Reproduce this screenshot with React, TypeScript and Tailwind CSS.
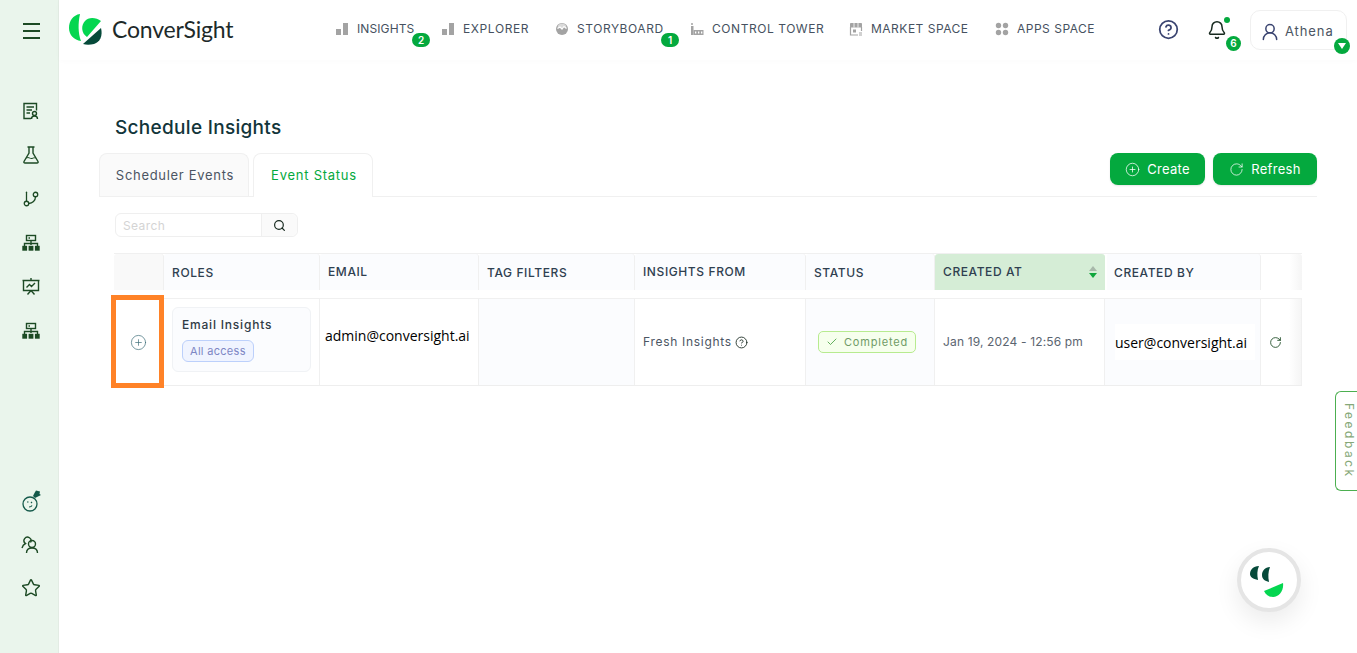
import React from "react";
import { CirclePlus, Check, RotateCw, Search, CircleHelp, Bell, UserRound, Star, GitBranch } from "lucide-react";

const font = "font-['Inter','Liberation_Sans',sans-serif]";

// green logo marks
const LogoMark = () => (
  <svg width="34" height="32" viewBox="69 13 34 32" className="shrink-0">
    <path d="M80 14 C73 15 69 21 69 28 C69 35 74 40 81 41 C78 33 78 23 80 14Z" fill="#04d650" />
    <path d="M101 21 C96 17 88 17 85 21 C81 25 81 33 87 37Z" fill="#04d650" />
    <path d="M83 44 L101 28 C103 36 100 42 94 44 C90 45 86 45 83 44Z" fill="#064a3a" />
  </svg>
);

const BarsIcon = () => (
  <svg width="14" height="14" viewBox="0 0 14 14" className="shrink-0">
    <rect x="1" y="7" width="5" height="6" fill="#a3a3a3" />
    <rect x="8" y="1" width="5" height="12" fill="#a3a3a3" />
  </svg>
);

const StoryIcon = () => (
  <svg width="14" height="14" viewBox="0 0 14 14" className="shrink-0">
    <circle cx="7" cy="7" r="6" fill="#a3a3a3" />
    <path d="M2.5 6.500 L5 5 L7 7 L9 4.500 L11.500 6.500" stroke="#fff" strokeWidth="1.2" fill="none" />
    <path d="M3 3.500 A5 5 0 0 1 11 3.500 L11.500 6.500 L9 4.500 L7 7 L5 5 L2.500 6.500Z" fill="#fff" opacity="0.6" />
  </svg>
);

const TowerIcon = () => (
  <svg width="14" height="14" viewBox="0 0 14 14" className="shrink-0">
    <path d="M2 1v2M1 2h2" stroke="#a3a3a3" strokeWidth="1" />
    <rect x="1" y="4" width="2.500" height="9" fill="#a3a3a3" />
    <rect x="3.500" y="8" width="10" height="5" fill="#a3a3a3" />
    <rect x="5" y="9.500" width="1.300" height="2" fill="#fff" />
    <rect x="8" y="9.500" width="1.300" height="2" fill="#fff" />
    <rect x="11" y="9.500" width="1.300" height="2" fill="#fff" />
  </svg>
);

const MarketIcon = () => (
  <svg width="14" height="14" viewBox="0 0 14 14" className="shrink-0" fill="none">
    <path d="M1.500 5V13H9M12.500 9V5" stroke="#a3a3a3" strokeWidth="1.2" />
    <rect x="1" y="1" width="12" height="4.500" rx="0.8" fill="#a3a3a3" />
    <path d="M5 1v4.500M9 1v4.500" stroke="#fff" strokeWidth="0.8" />
    <rect x="4" y="7.500" width="3" height="3" fill="#a3a3a3" />
    <path d="M10 11h3M10 13h3" stroke="#a3a3a3" strokeWidth="1" />
  </svg>
);

const AppsIcon = () => (
  <svg width="14" height="14" viewBox="0 0 14 14" className="shrink-0">
    <circle cx="3.500" cy="3.500" r="2.700" fill="#a3a3a3" />
    <circle cx="10.500" cy="3.500" r="2.700" fill="#a3a3a3" />
    <circle cx="3.500" cy="10.500" r="2.700" fill="#a3a3a3" />
    <circle cx="10.500" cy="10.500" r="2.700" fill="#a3a3a3" />
  </svg>
);

const ReportIcon = () => (
  <svg width="18" height="18" viewBox="0 0 18 18" fill="none" stroke="#1c4a24" strokeWidth="1.4">
    <path d="M9 16.500H2V1.500H14.500V8.500" />
    <path d="M4.500 5H12M4.500 8H10M4.500 11H8" />
    <circle cx="12.500" cy="11.500" r="2" />
    <path d="M9.500 17C9.500 15 11 14 12.500 14S15.500 15 15.500 17" />
  </svg>
);

const FlaskIcon = () => (
  <svg width="18" height="18" viewBox="0 0 18 18" fill="none" stroke="#1c4a24" strokeWidth="1.4">
    <path d="M5.500 1H12.500M7 1V7L2 15.500C1.600 16.300 2.100 17 3 17H15C15.900 17 16.400 16.300 16 15.500L11 7V1" />
    <path d="M4.500 12C6.500 10.500 8 13 10 12.500C11.500 12 12 11.500 13.500 12" strokeWidth="1" />
  </svg>
);

const NetworkIcon = () => (
  <svg width="18" height="18" viewBox="0 0 18 18" fill="none" stroke="#1c4a24" strokeWidth="1.4">
    <rect x="4.500" y="1.500" width="9" height="5" />
    <path d="M6.500 4H8" />
    <path d="M9 6.500V11M2.500 12.500V9.500H15.500V12.500" />
    <rect x="1" y="12.500" width="3.400" height="3.500" fill="#1c4a24" />
    <rect x="7.300" y="12.500" width="3.400" height="3.500" fill="#1c4a24" />
    <rect x="13.600" y="12.500" width="3.400" height="3.500" fill="#1c4a24" />
  </svg>
);

const BoardIcon = () => (
  <svg width="18" height="18" viewBox="0 0 18 18" fill="none" stroke="#1c4a24" strokeWidth="1.4">
    <path d="M9 0V2M.5 2.500H17.500M1.500 2.500V12.500H16.500V2.500" />
    <path d="M4.500 9.500L7.500 6.500L9.500 8.500L13 5" />
    <path d="M9 12.500L5.500 16.500M9 12.500L12.500 16.500" />
  </svg>
);

const BotIcon = () => (
  <svg width="20" height="22" viewBox="0 0 20 22" fill="none">
    <circle cx="9" cy="14" r="7" stroke="#14594a" strokeWidth="1.3" />
    <path d="M6 12h1.500M10 12l1 1M8 17c1.500 0 2.500-.5 3-1.500" stroke="#14594a" strokeWidth="1.2" />
    <path d="M12 6L13.500 3L15 .5L19 1.500L18.500 4L20 5L14 8Z" fill="#14594a" />
  </svg>
);

const PeopleIcon = () => (
  <svg width="20" height="18" viewBox="0 0 20 18" fill="none" stroke="#1c4a24" strokeWidth="1.4">
    <path d="M9.500 6.500A3.500 3.500 0 1 0 4.500 7.500C2.500 8.500 1.500 10 1 12" />
    <circle cx="11" cy="8" r="3.500" />
    <path d="M5.500 17C5.500 13.500 8 12 11 12S16.500 13.500 16.500 17" />
  </svg>
);

const ChatLogo = () => (
  <svg width="50" height="50" viewBox="0 0 50 50">
    <path d="M15 11C9 11 6 15 6 19C6 22 9 24 14 25C13 20 13 15 15 11Z" fill="#064a3a" />
    <path d="M26 12C21 12 18 16 18 20C18 24 21 26 25 27C24 22 24 17 26 12Z" fill="#064a3a" />
    <path d="M20 36L39 28C40 36 35 42 29 42C25 42 22 40 20 36Z" fill="#04d650" />
  </svg>
);

const navItems = [
  { label: "INSIGHTS", icon: <BarsIcon />, cls: "w-[59px] tracking-[0.1px]", badge: "2" },
  { label: "EXPLORER", icon: <BarsIcon />, cls: "w-[67px] tracking-[0.6px]" },
  { label: "STORYBOARD", icon: <StoryIcon />, cls: "w-[88px] tracking-[0.55px]", badge: "1" },
  { label: "CONTROL TOWER", icon: <TowerIcon />, cls: "w-[112px] tracking-[0.55px]" },
  { label: "MARKET SPACE", icon: <MarketIcon />, cls: "w-[99px] tracking-[0.5px]" },
  { label: "APPS SPACE", icon: <AppsIcon />, cls: "w-[78px] tracking-[0.5px]" },
];

const Header = () => (
  <header className="flex h-[60px] shrink-0 items-start bg-white shadow-[0_1px_6px_rgba(0,0,0,0.02)]">
    <div className="flex w-[276px] shrink-0 items-center gap-[9px] pl-[10px] pt-[13px]">
      <LogoMark />
      <span className="text-[23px] font-normal leading-8 tracking-[-0.2px] text-[#1d2a2a] font-['Lato',sans-serif]">ConverSight</span>
    </div>
    <nav className="flex gap-[25px] pt-[20px]">
      {navItems.map((item) => (
        <div key={item.label} className="relative flex h-[18px] items-center gap-2">
          {item.icon}
          <span className={`${item.cls} whitespace-nowrap text-[12px] leading-[18px] text-[#465160]`}>{item.label}</span>
          {item.badge && (
            <span className="absolute -right-[14px] top-[13px] flex h-[14px] w-[18px] items-center justify-center rounded-full bg-[#04a93e] text-[10px] font-semibold text-white">
              {item.badge}
            </span>
          )}
        </div>
      ))}
    </nav>
    <div className="ml-auto flex items-start pt-[10px]">
      <CircleHelp size={21} strokeWidth={2} className="mr-[28px] mt-[9px] text-[#3a4470]" />
      <div className="relative mr-[23px] mt-[10px]">
        <Bell size={20} strokeWidth={1.8} className="text-[#17291f]" />
        <span className="absolute -right-[3px] -top-[3px] h-[6px] w-[6px] rounded-full bg-[#04a93e]" />
        <span className="absolute -right-[14px] top-[16px] flex h-[15px] w-[15px] items-center justify-center rounded-full bg-[#04a93e] text-[10px] font-semibold text-white">6</span>
      </div>
      <div className="relative mr-[10px] flex h-[40px] w-[97px] items-center gap-[5px] rounded-[10px] border border-[#f0f0f0] pl-[9px] pt-[3px]">
        <UserRound size={20} strokeWidth={1.8} className="text-[#3a4470]" />
        <span className="text-[13px] tracking-[0.9px] text-[#4b5563]">Athena</span>
        <span className="absolute -bottom-[5px] -right-[4px] flex h-[16px] w-[16px] items-center justify-center rounded-full bg-[#04a93e]">
          <span className="h-0 w-0 border-x-[4px] border-t-[6px] border-x-transparent border-t-white" />
        </span>
      </div>
    </div>
  </header>
);

const Sidebar = () => (
  <aside className="flex w-[59px] shrink-0 flex-col items-center border-r border-[#e3ece4] bg-[#eaf5ec] pb-[55px] pt-[23px]">
    <div className="ml-[4px] flex w-[17px] flex-col gap-[5px]">
      <span className="h-[2px] bg-[#1c4a24]" />
      <span className="h-[2px] bg-[#1c4a24]" />
      <span className="h-[2px] bg-[#1c4a24]" />
    </div>
    <div className="ml-[4px] mt-[63px] flex flex-col items-center gap-[26px] [&>*]:h-[18px]">
      <ReportIcon />
      <FlaskIcon />
      <GitBranch size={18} strokeWidth={1.7} className="text-[#1c4a24]" />
      <NetworkIcon />
      <BoardIcon />
      <NetworkIcon />
    </div>
    <div className="ml-[4px] mt-auto flex flex-col items-center gap-[24px]">
      <BotIcon />
      <PeopleIcon />
      <Star size={20} strokeWidth={1.7} className="text-[#1c4a24]" />
    </div>
  </aside>
);

const headCell = "flex items-center h-[36px] px-[8px] pt-[2px] text-[12px] font-medium tracking-[0.6px] text-[#2f4050] rounded-t-[3px]";

const EventTable = () => (
  <div className="relative ml-[15px] w-[1188px]">
    <div className="grid grid-cols-[50px_156px_159px_156px_171px_129px_170px_156px_41px] border-t border-[#f0f0f0]">
      <div className={`${headCell} bg-[#f9f9f9] border-r border-[#f0f0f0]`} />
      <div className={`${headCell} bg-[#fbfcfe] border-r border-[#f0f0f0]`}>ROLES</div>
      <div className={`${headCell} bg-[#fbfcfe] border-r border-[#f0f0f0] pb-[2px]`}>EMAIL</div>
      <div className={`${headCell} bg-[#fbfcfe] border-r border-[#f0f0f0]`}>TAG FILTERS</div>
      <div className={`${headCell} bg-[#fbfcfe] border-r border-[#f0f0f0] pb-[2px]`}>INSIGHTS FROM</div>
      <div className={`${headCell} bg-[#fbfcfe] border-r border-[#f0f0f0]`}>STATUS</div>
      <div className={`${headCell} justify-between bg-[#d5edd6] pb-[2px]`}>
        CREATED AT
        <span className="flex flex-col gap-[2px]">
          <span className="h-0 w-0 border-x-[4px] border-b-[5px] border-x-transparent border-b-[#a8b8aa]" />
          <span className="h-0 w-0 border-x-[4px] border-t-[5px] border-x-transparent border-t-[#0fa63c]" />
        </span>
      </div>
      <div className={`${headCell} bg-[#fbfcfe] border-l-2 border-r border-l-white border-r-[#f0f0f0] pl-[7px]`}>CREATED BY</div>
      <div className={`${headCell} bg-gradient-to-r from-white from-70% to-[#f5f5f5]`} />
    </div>
    <div className="grid h-[96px] grid-cols-[50px_156px_159px_156px_171px_129px_170px_156px_41px] border-b border-[#eeeeee] pt-[8px] [&>*]:border-r [&>*]:border-t [&>*]:border-[#f0f0f0]">
      <div className="flex items-center justify-center bg-white">
        <CirclePlus size={17} strokeWidth={1} className="text-[#3f6f7a]" />
      </div>
      <div className="flex items-center bg-white px-[8px]">
        <div className="mb-[5px] h-[65px] w-full rounded-[6px] border border-[#f0f2f5] bg-[#fbfcfe] px-[9px] pt-[8px]">
          <p className="text-[12px] font-medium leading-[18px] tracking-[0.8px] text-[#2f3b45]">Email Insights</p>
          <span className="mt-[6px] inline-block rounded-[6px] border border-[#bcd0fb] bg-[#f0f4ff] px-[7px] text-[11px] leading-[20px] tracking-[0.3px] text-[#7d86c4]">All access</span>
        </div>
      </div>
      <div className="flex items-center bg-white px-[5px] pb-[14px] font-['Open_Sans',sans-serif] text-[14px] text-black">admin@conversight.ai</div>
      <div className="bg-[#fbfcfe]" />
      <div className="flex items-center gap-[3px] bg-white px-[8px] text-[12px] tracking-[0.7px] text-[#4b5563]">
        Fresh Insights
        <CircleHelp size={13} strokeWidth={1.6} className="text-[#17291f]" />
      </div>
      <div className="flex items-center bg-[#fbfcfe] pl-[12px]">
        <span className="flex h-[22px] w-[98px] items-center gap-[6px] rounded-[5px] border border-[#b7eb8f] bg-[#f6ffed] pl-[7px] text-[11px] tracking-[0.8px] text-[#6f9b66]">
          <Check size={12} strokeWidth={1.6} className="text-[#3f9a38]" />
          Completed
        </span>
      </div>
      <div className="flex items-center bg-white px-[8px] text-[12px] tracking-[0.15px] text-[#5b6570]">Jan 19, 2024 - 12:56 pm</div>
      <div className="flex items-center bg-[#fbfcfe] pl-[10px]">
        <span className="flex h-[36px] w-[140px] items-center bg-white font-['Open_Sans',sans-serif] text-[14px] text-black">user@conversight.ai</span>
      </div>
      <div className="flex items-center bg-gradient-to-r from-white from-70% to-[#f5f5f5] pl-[8px]">
        <RotateCw size={13} strokeWidth={1.6} className="text-[#1c4a24]" />
      </div>
    </div>
    <div className="absolute -left-[3px] top-[42px] h-[93px] w-[53px] border-[5px] border-[#ff8227]" />
  </div>
);

const Main = () => (
  <main className="flex-1 pl-[40px] pr-[40px] pt-[55px]">
    <h1 className="ml-[16px] text-[19px] font-medium leading-[26px] tracking-[0.3px] text-[#12353a]">Schedule Insights</h1>
    <div className="mt-[12px] flex items-start justify-between border-b border-[#f0f0f0]">
      <div className="flex gap-[4px]">
        <div className="flex h-[43px] w-[150px] items-center justify-center rounded-t-[8px] border border-b-0 border-[#f0f0f0] bg-[#fafafa] pl-[2px] pt-[2px] text-[13px] tracking-[0.7px] text-[#4b5563]">Scheduler Events</div>
        <div className="-mb-[1px] flex h-[44px] w-[120px] items-center justify-center rounded-t-[8px] border border-b-0 border-[#f0f0f0] bg-white pl-[2px] text-[13px] tracking-[0.75px] text-[#04a93e]">Event Status</div>
      </div>
      <div className="flex gap-[8px]">
        <button type="button" className="flex h-[32px] w-[95px] items-center justify-center gap-[7px] rounded-[8px] bg-[#04a93e] pt-[1px] text-[13px] tracking-[0.3px] text-white shadow-[0_1px_2px_rgba(0,0,0,0.1)]">
          <CirclePlus size={15} strokeWidth={1.2} />
          Create
        </button>
        <button type="button" className="flex h-[32px] w-[104px] items-center justify-center gap-[7px] rounded-[8px] bg-[#04a93e] pt-[1px] text-[13px] tracking-[0.3px] text-white shadow-[0_1px_2px_rgba(0,0,0,0.1)]">
          <RotateCw size={15} strokeWidth={1.2} />
          Refresh
        </button>
      </div>
    </div>
    <div className="ml-[16px] mt-[16px] flex h-[24px] w-[183px] rounded-[6px] border border-[#efefef]">
      <div className="flex-1 pl-[7px] text-[12px] leading-[24px] tracking-[0.4px] text-[#d4d4d4]">Search</div>
      <div className="flex w-[36px] items-center justify-center rounded-r-[6px] border-l border-[#efefef] bg-[#fafafa]">
        <Search size={13} strokeWidth={2.2} className="text-[#17291f]" />
      </div>
    </div>
    <div className="mt-[16px]">
      <EventTable />
    </div>
  </main>
);

export default function App() {
  return (
    <div className={`${font} relative flex h-[653px] w-[1357px] overflow-hidden bg-white`}>
      <Sidebar />
      <div className="flex min-w-0 flex-1 flex-col">
        <Header />
        <Main />
      </div>
      <div className="absolute right-0 top-[391px] flex h-[100px] w-[22px] items-center justify-center rounded-l-[6px] border border-r-0 border-[#4caf50] bg-white pl-[4px]">
        <span className="text-[12px] tracking-[2.5px] text-[#86a878] [writing-mode:vertical-rl]">Feedback</span>
      </div>
      <div className="absolute left-[1237px] top-[548px] flex h-[64px] w-[64px] items-center justify-center rounded-full border-[4px] border-[#e5e5e5] bg-white shadow-[0_10px_24px_rgba(0,0,0,0.08)]">
        <ChatLogo />
      </div>
    </div>
  );
}
